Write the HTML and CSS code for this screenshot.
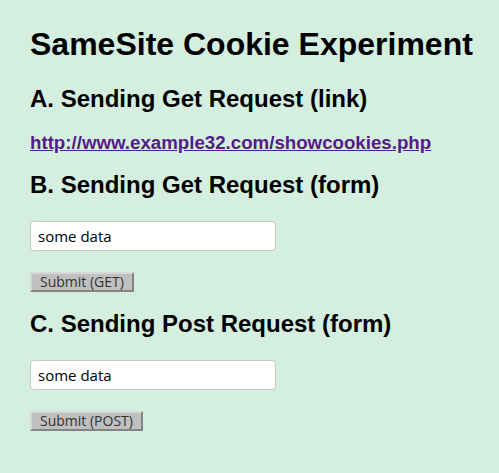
FILE: index.html
```html
<!DOCTYPE html>
<html>
<head>
<meta charset="utf-8">
<link rel="stylesheet" href="styles.css">
</head>
<body>
<h1>SameSite Cookie Experiment</h1>
<h2>A. Sending Get Request (link)</h2>
<p class="linkrow"><a href="#">http://www.example32.com/showcookies.php</a></p>
<h2>B. Sending Get Request (form)</h2>
<form class="form">
  <input class="field" type="text" value="some data">
  <button class="btn" type="button">Submit (GET)</button>
</form>
<h2>C. Sending Post Request (form)</h2>
<form class="form">
  <input class="field" type="text" value="some data">
  <button class="btn" type="button">Submit (POST)</button>
</form>
</body>
</html>
```
FILE: styles.css
```css
html { background: #d4eee0; }
body {
  margin: 0;
  padding: 26px 10px 20px 30px;
  font-family: "Liberation Sans", Arial, sans-serif;
  color: #000;
}
h1 { font-size: 32px; margin: 0 0 22px; font-weight: bold; white-space: nowrap; }
h2 { font-size: 24px; margin: 0 0 19px; font-weight: bold; }
.linkrow { margin: 0 0 17px; font-size: 18.7px; font-weight: bold; }
.linkrow a { color: #551a8b; }
.form { display: flex; flex-direction: column; align-items: flex-start; gap: 21px; padding-top: 3px; margin-bottom: 18px; }
.field {
  width: 246px; height: 30px; box-sizing: border-box;
  border: 1px solid #c8c8c8; border-radius: 4px; background: #fff;
  padding: 0 7px; font-family: "Open Sans", sans-serif; font-size: 15px; color: #000;
}
.btn {
  font-family: "Open Sans", sans-serif; font-size: 14px; color: #333;
  background: #c0c0c0; border: 2px outset #d8d8d8; padding: 0 8px; height: 20px; line-height: 14px;
}
```
